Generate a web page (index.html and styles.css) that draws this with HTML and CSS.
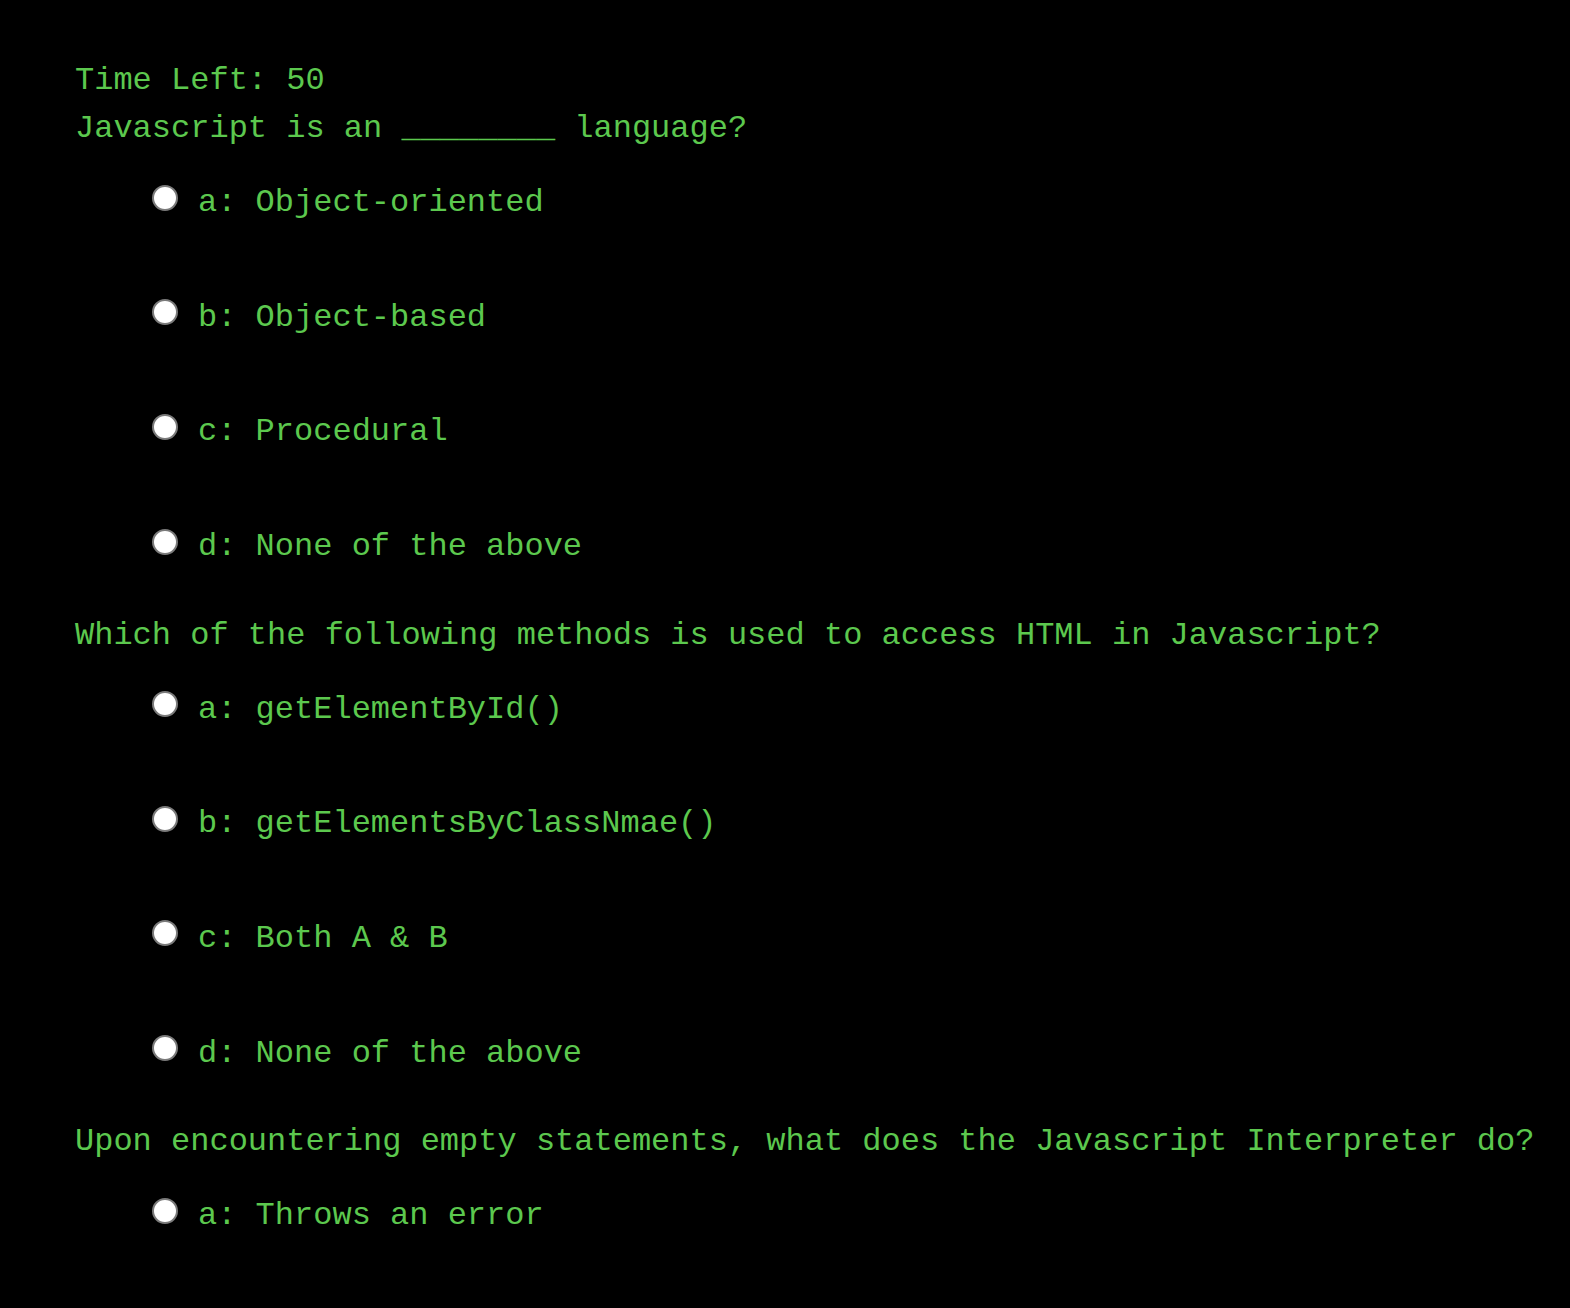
FILE: index.html
```html
<!DOCTYPE html>
<html lang="en">
<head>
<meta charset="utf-8">
<title>Quiz</title>
<link rel="stylesheet" href="styles.css">
</head>
<body>
<main class="quiz">
  <div class="timer">Time Left: 50</div>

  <section class="question-block">
    <div class="question">Javascript is an ________ language?</div>
    <div class="options">
      <label class="option"><input type="radio" name="q1" class="radio"><span>a: Object-oriented</span></label>
      <label class="option"><input type="radio" name="q1" class="radio"><span>b: Object-based</span></label>
      <label class="option"><input type="radio" name="q1" class="radio"><span>c: Procedural</span></label>
      <label class="option"><input type="radio" name="q1" class="radio"><span>d: None of the above</span></label>
    </div>
  </section>

  <section class="question-block">
    <div class="question">Which of the following methods is used to access HTML in Javascript?</div>
    <div class="options">
      <label class="option"><input type="radio" name="q2" class="radio"><span>a: getElementById()</span></label>
      <label class="option"><input type="radio" name="q2" class="radio"><span>b: getElementsByClassNmae()</span></label>
      <label class="option"><input type="radio" name="q2" class="radio"><span>c: Both A &amp; B</span></label>
      <label class="option"><input type="radio" name="q2" class="radio"><span>d: None of the above</span></label>
    </div>
  </section>

  <section class="question-block">
    <div class="question">Upon encountering empty statements, what does the Javascript Interpreter do?</div>
    <div class="options">
      <label class="option"><input type="radio" name="q3" class="radio"><span>a: Throws an error</span></label>
    </div>
  </section>
</main>
</body>
</html>
```

FILE: styles.css
```css
html, body {
  margin: 0;
  padding: 0;
  background: #000;
}

body {
  color: #5cc84e;
  font-family: "Courier New", "Liberation Mono", monospace;
  font-size: 32px;
  line-height: 48px;
}

.quiz {
  padding: 57px 0 0 75px;
}

.timer,
.question {
  white-space: nowrap;
}

.question-block + .question-block {
  margin-top: 40.5px;
}

.options {
  display: flex;
  flex-direction: column;
  gap: 66.7px;
  margin-top: 26px;
  padding-left: 77px;
}

.option {
  display: flex;
  align-items: flex-start;
  gap: 20px;
  height: 48px;
  cursor: pointer;
}

.radio {
  appearance: none;
  -webkit-appearance: none;
  margin: 5.5px 0 0 0;
  width: 26px;
  height: 26px;
  border-radius: 50%;
  border: 2px solid #7a7a7a;
  background: #fff;
  box-sizing: border-box;
  flex: none;
}
```
